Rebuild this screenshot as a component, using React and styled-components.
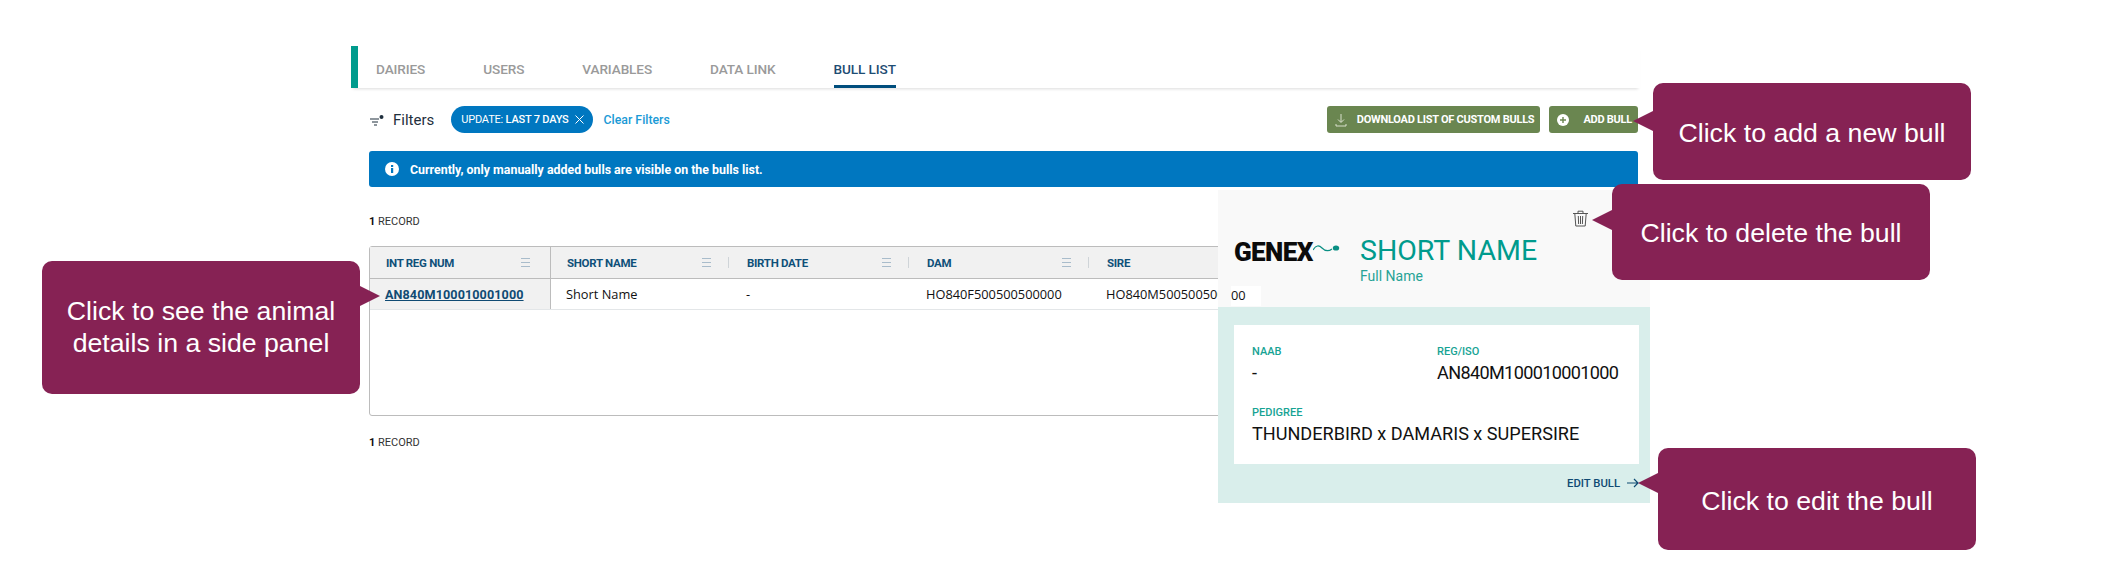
import React from 'react'
import styled, { createGlobalStyle } from 'styled-components'

const GlobalStyle = createGlobalStyle`
  html, body {
    margin: 0;
    background: #fff;
    font-family: "Roboto", "Liberation Sans", sans-serif;
  }
`

const Page = styled.div`
  position: relative;
  width: 2118px;
  height: 562px;
  overflow: hidden;
  padding: 46px 0 0 351px;
  box-sizing: border-box;
`

const TabBar = styled.div`
  display: flex;
  gap: 58px;
  width: 1289px;
  height: 42px;
  box-sizing: border-box;
  padding-left: 18px;
  border-left: 7px solid #009b8d;
  box-shadow: 0 3px 3px -2px rgba(0, 0, 0, 0.14);
`

const Tab = styled.div`
  height: 42px;
  box-sizing: border-box;
  padding-top: 15px;
  font-size: 13.6px;
  line-height: 16px;
  font-weight: 500;
  letter-spacing: -0.1px;
  color: ${props => (props.$active ? '#1e4d73' : '#9a9a9a')};
  border-bottom: 3px solid ${props => (props.$active ? '#004e7d' : 'transparent')};
`

const Content = styled.div`
  width: 1269px;
  margin-left: 18px;
`

const Toolbar = styled.div`
  display: flex;
  align-items: center;
  height: 27px;
  margin-top: 18px;
`

const FiltersLabel = styled.span`
  margin-left: 9px;
  font-size: 15px;
  color: #1f2f3d;
`

const Pill = styled.div`
  display: flex;
  align-items: center;
  height: 27px;
  margin-left: 17px;
  padding: 0 9px 0 10px;
  border-radius: 14px;
  background: #0077c0;
  color: #fff;
  font-size: 11px;
  letter-spacing: -0.2px;
  b {
    font-weight: 500;
  }
`

const ClearLink = styled.a`
  margin-left: 11px;
  font-size: 12.3px;
  font-weight: 500;
  color: #1a9ad6;
`

const Actions = styled.div`
  display: flex;
  gap: 9px;
  margin-left: auto;
`

const GreenButton = styled.button`
  display: flex;
  align-items: center;
  height: 27px;
  padding: 0 6px 0 8px;
  border: 0;
  border-radius: 3px;
  background: #6a8650;
  color: #fff;
  font-family: inherit;
  font-size: 11px;
  font-weight: 700;
  letter-spacing: -0.25px;
  white-space: nowrap;
`

const ButtonIcon = styled.span`
  display: flex;
  margin-right: ${props => props.$gap}px;
`

const Banner = styled.div`
  display: flex;
  align-items: center;
  height: 36px;
  margin-top: 18px;
  padding-left: 16px;
  border-radius: 3px;
  background: #0077c0;
  color: #fff;
  font-size: 12.4px;
  font-weight: 700;
`

const BannerText = styled.span`
  margin-left: 11px;
`

const RecordCount = styled.div`
  margin-top: ${props => props.$top}px;
  font-family: "Roboto", sans-serif;
  font-size: 11px;
  line-height: 16px;
  color: #333;
  b {
    color: #111;
  }
`

const Table = styled.div`
  height: 170px;
  margin-top: 16px;
  box-sizing: border-box;
  border: 1px solid #bcbcbc;
  border-radius: 3px;
`

const HeaderRow = styled.div`
  display: flex;
  height: 32px;
  box-sizing: border-box;
  background: #f1f1f1;
  border-bottom: 1px solid #bcbcbc;
`

const HeaderCell = styled.div`
  position: relative;
  display: flex;
  align-items: center;
  width: ${props => (props.$first ? 181 : 180)}px;
  box-sizing: border-box;
  padding-left: 16px;
  border-right: ${props => (props.$first ? '1px solid #bcbcbc' : '0')};
  font-size: 11.5px;
  font-weight: 700;
  letter-spacing: -0.3px;
  color: #0f5079;
`

const MenuIcon = styled.span`
  position: absolute;
  right: 20px;
  top: 11px;
  width: 9px;
  height: 7px;
  border-top: 1px solid #a9bccb;
  border-bottom: 1px solid #a9bccb;
  &::after {
    content: '';
    display: block;
    height: 1px;
    margin-top: 3px;
    background: #a9bccb;
  }
`

const Divider = styled.span`
  position: absolute;
  right: 2px;
  top: 10px;
  width: 1px;
  height: 11px;
  background: #cfd4d8;
`

const BodyRow = styled.div`
  display: flex;
  height: 31px;
  box-sizing: border-box;
  border-bottom: 1px solid #e3e6e8;
`

const BodyCell = styled.div`
  display: flex;
  align-items: center;
  width: ${props => (props.$first ? 181 : 180)}px;
  box-sizing: border-box;
  padding-left: 15px;
  font-family: "Open Sans", sans-serif;
  font-size: 12.8px;
  color: #111;
  white-space: nowrap;
  background: ${props => (props.$first ? '#f1f1f1' : 'transparent')};
  border-right: ${props => (props.$first ? '1px solid #bcbcbc' : '0')};
`

const AnimalLink = styled.a`
  font-family: "Roboto", sans-serif;
  font-size: 12.6px;
  font-weight: 700;
  letter-spacing: 0.1px;
  color: #0f4a73;
  text-decoration: underline;
`

const SidePanel = styled.aside`
  position: absolute;
  left: 1218px;
  top: 190px;
  width: 432px;
  height: 313px;
  display: flex;
  flex-direction: column;
  background: #f9f9f9;
`

const PanelHead = styled.div`
  position: relative;
  height: 117px;
  display: flex;
  padding: 47px 0 0 16px;
  box-sizing: border-box;
`

const Logo = styled.div`
  display: flex;
  align-items: flex-start;
  width: 126px;
  margin-top: 2px;
`

const LogoWord = styled.span`
  font-family: "Roboto", "Liberation Sans", sans-serif;
  font-size: 26px;
  line-height: 26px;
  font-weight: 900;
  letter-spacing: -0.6px;
  color: #0b0b0b;
`

const Names = styled.div`
  display: flex;
  flex-direction: column;
`

const ShortName = styled.div`
  font-size: 28.5px;
  line-height: 28px;
  font-weight: 400;
  color: #009b8d;
`

const FullName = styled.div`
  margin-top: 3px;
  font-size: 14px;
  line-height: 16px;
  color: #26a396;
`

const TrashButton = styled.span`
  position: absolute;
  left: 354px;
  top: 20px;
  display: flex;
`

const ClippedCell = styled.span`
  position: absolute;
  left: 13px;
  top: 96px;
  width: 30px;
  height: 20px;
  background: #fff;
  font-family: "Open Sans", sans-serif;
  font-size: 12.8px;
  line-height: 18px;
  color: #111;
`

const PanelBody = styled.div`
  flex: 1;
  background: #d9eeeb;
  padding: 18px 11px 0 16px;
`

const InfoCard = styled.div`
  display: grid;
  grid-template-columns: 185px 1fr;
  grid-template-rows: 61px 1fr;
  height: 139px;
  box-sizing: border-box;
  padding: 20px 0 0 18px;
  background: #fff;
`

const Field = styled.div`
  grid-column: ${props => (props.$wide ? '1 / span 2' : 'auto')};
`

const FieldLabel = styled.div`
  font-size: 11px;
  line-height: 13px;
  font-weight: 500;
  color: #17a394;
`

const FieldValue = styled.div`
  margin-top: 4px;
  font-size: 18.1px;
  line-height: 22px;
  letter-spacing: ${props => props.$spacing || 0}px;
  color: #111;
  white-space: nowrap;
`

const EditRow = styled.div`
  display: flex;
  align-items: center;
  justify-content: flex-end;
  height: 38px;
  gap: 7px;
  font-size: 11.3px;
  font-weight: 500;
  color: #0f4a73;
`

const Callout = styled.div`
  position: absolute;
  left: ${props => props.$left}px;
  top: ${props => props.$top}px;
  width: 318px;
  height: ${props => props.$height}px;
  box-sizing: border-box;
  padding-top: ${props => props.$pad}px;
  border-radius: 10px;
  background: #862254;
  color: #fff;
  font-family: "Liberation Sans", Arial, sans-serif;
  font-size: 26.7px;
  line-height: 32px;
  text-align: center;
  &::before {
    content: '';
    position: absolute;
    top: ${props => props.$tip - 10}px;
    ${props => (props.$tipRight ? 'right: -20px;' : 'left: -20px;')}
    border-style: solid;
    border-color: transparent;
    ${props => (props.$tipRight
      ? 'border-width: 10px 0 10px 20px; border-left-color: #862254;'
      : 'border-width: 10px 20px 10px 0; border-right-color: #862254;')}
  }
`

const columns = ['SHORT NAME', 'BIRTH DATE', 'DAM', 'SIRE']

const FilterIcon = () => (
  <svg width="15" height="14" viewBox="0 0 15 14" fill="none" stroke="#1f2f3d" strokeWidth="1.2">
    <path d="M1 6h9M3 9h6M5 12h3" />
    <circle cx="12.5" cy="4" r="2" fill="#1f2f3d" stroke="none" />
  </svg>
)

const CloseIcon = () => (
  <svg width="9" height="9" viewBox="0 0 9 9" stroke="#fff" strokeWidth="1" style={{ marginLeft: 6 }}>
    <path d="M0.5 0.5l8 8M8.5 0.5l-8 8" />
  </svg>
)

const DownloadIcon = () => (
  <svg width="12" height="14" viewBox="0 0 12 14" fill="none" stroke="#e4ead9" strokeWidth="0.9">
    <path d="M6 1v8M3 6.5L6 9.5 9 6.5M1 11v2h10v-2" />
  </svg>
)

const PlusIcon = () => (
  <svg width="12" height="12" viewBox="0 0 12 12">
    <circle cx="6" cy="6" r="6" fill="#fff" />
    <path d="M6 3v6M3 6h6" stroke="#6a8650" strokeWidth="1.4" />
  </svg>
)

const InfoIcon = () => (
  <svg width="14" height="14" viewBox="0 0 14 14">
    <circle cx="7" cy="7" r="7" fill="#fff" />
    <rect x="6" y="6" width="2.2" height="5" fill="#0077c0" />
    <rect x="6" y="3" width="2.2" height="2" fill="#0077c0" />
  </svg>
)

const Squiggle = () => (
  <svg width="28" height="12" viewBox="0 0 28 12" fill="none" style={{ marginLeft: 0, marginTop: 4 }}>
    <path d="M0 7c3-5 6-5 9-2s6 4 10 1" stroke="#0a8f83" strokeWidth="1.2" />
    <ellipse cx="23" cy="5" rx="3.2" ry="2.6" fill="#0a8f83" />
  </svg>
)

const TrashIcon = () => (
  <svg width="17" height="17" viewBox="0 0 17 17" fill="none" stroke="#555" strokeWidth="1">
    <path d="M1 3.5h15M6 3.5V1.2h5v2.3M2.8 3.5l1 12.5h9.4l1-12.5M6.3 6l.3 8M8.5 6v8M10.7 6l-.3 8" />
  </svg>
)

const ArrowIcon = () => (
  <svg width="12" height="10" viewBox="0 0 12 10" fill="none" stroke="#0f4a73" strokeWidth="1.2">
    <path d="M0 5h11M7 1l4 4-4 4" />
  </svg>
)

export default function App() {
  return (
    <Page>
      <GlobalStyle />
      <TabBar>
        <Tab>DAIRIES</Tab>
        <Tab>USERS</Tab>
        <Tab>VARIABLES</Tab>
        <Tab>DATA LINK</Tab>
        <Tab $active>BULL LIST</Tab>
      </TabBar>
      <Content>
        <Toolbar>
          <FilterIcon />
          <FiltersLabel>Filters</FiltersLabel>
          <Pill>
            UPDATE:&nbsp;<b>LAST 7 DAYS</b>
            <CloseIcon />
          </Pill>
          <ClearLink>Clear Filters</ClearLink>
          <Actions>
            <GreenButton>
              <ButtonIcon $gap={10}><DownloadIcon /></ButtonIcon>
              DOWNLOAD LIST OF CUSTOM BULLS
            </GreenButton>
            <GreenButton>
              <ButtonIcon $gap={14}><PlusIcon /></ButtonIcon>
              ADD BULL
            </GreenButton>
          </Actions>
        </Toolbar>
        <Banner>
          <InfoIcon />
          <BannerText>Currently, only manually added bulls are visible on the bulls list.</BannerText>
        </Banner>
        <RecordCount $top={27}><b>1</b> RECORD</RecordCount>
        <Table>
          <HeaderRow>
            <HeaderCell $first>
              INT REG NUM
              <MenuIcon />
            </HeaderCell>
            {columns.map(col => (
              <HeaderCell key={col}>
                {col}
                <MenuIcon />
                <Divider />
              </HeaderCell>
            ))}
          </HeaderRow>
          <BodyRow>
            <BodyCell $first><AnimalLink>AN840M100010001000</AnimalLink></BodyCell>
            <BodyCell>Short Name</BodyCell>
            <BodyCell>-</BodyCell>
            <BodyCell>HO840F500500500000</BodyCell>
            <BodyCell>HO840M500500500000</BodyCell>
          </BodyRow>
        </Table>
        <RecordCount $top={19}><b>1</b> RECORD</RecordCount>
      </Content>

      <SidePanel>
        <PanelHead>
          <Logo>
            <LogoWord>GENEX</LogoWord>
            <Squiggle />
          </Logo>
          <Names>
            <ShortName>SHORT NAME</ShortName>
            <FullName>Full Name</FullName>
          </Names>
          <TrashButton><TrashIcon /></TrashButton>
          <ClippedCell>00</ClippedCell>
        </PanelHead>
        <PanelBody>
          <InfoCard>
            <Field>
              <FieldLabel>NAAB</FieldLabel>
              <FieldValue>-</FieldValue>
            </Field>
            <Field>
              <FieldLabel>REG/ISO</FieldLabel>
              <FieldValue $spacing={-0.65}>AN840M100010001000</FieldValue>
            </Field>
            <Field $wide>
              <FieldLabel>PEDIGREE</FieldLabel>
              <FieldValue>THUNDERBIRD x DAMARIS x SUPERSIRE</FieldValue>
            </Field>
          </InfoCard>
          <EditRow>
            EDIT BULL
            <ArrowIcon />
          </EditRow>
        </PanelBody>
      </SidePanel>

      <Callout $left={42} $top={261} $height={133} $pad={34} $tip={35} $tipRight>
        Click to see the animal<br />details in a side panel
      </Callout>
      <Callout $left={1653} $top={83} $height={97} $pad={34} $tip={38}>Click to add a new bull</Callout>
      <Callout $left={1612} $top={184} $height={96} $pad={33} $tip={36}>Click to delete the bull</Callout>
      <Callout $left={1658} $top={448} $height={102} $pad={37} $tip={35}>Click to edit the bull</Callout>
    </Page>
  )
}
